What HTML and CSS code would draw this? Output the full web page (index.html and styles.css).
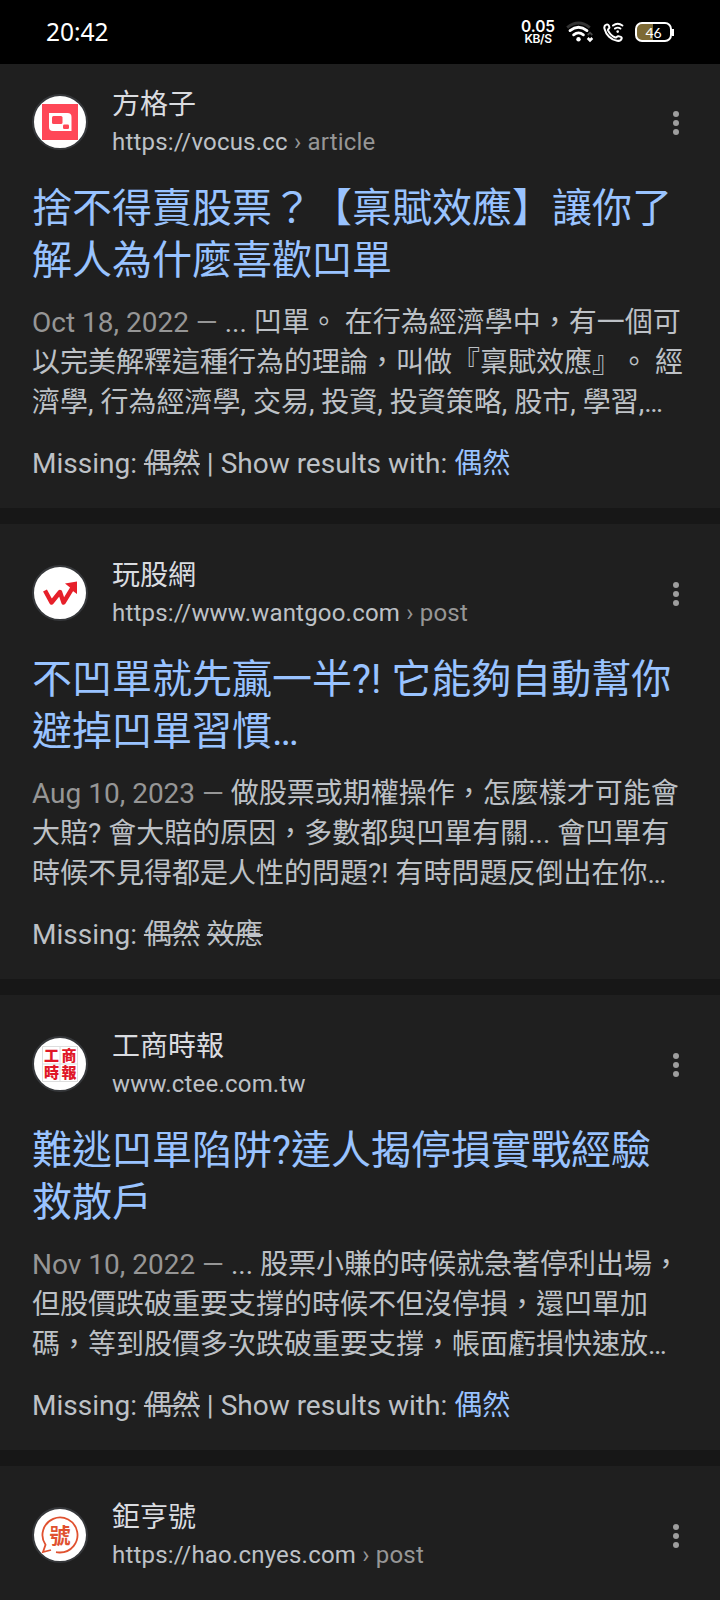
FILE: index.html
```html
<!DOCTYPE html>
<html lang="zh-Hant">
<head>
<meta charset="utf-8">
<title>Search results</title>
<link rel="stylesheet" href="styles.css">
</head>
<body>
<header class="status">
  <span class="clock">20:42</span>
  <div class="net"><span class="net-value">0.05</span><span class="net-unit">KB/S</span></div>
  <svg class="wifi" width="28" height="24" viewBox="0 0 28 24" fill="none">
    <path d="M1.2 7.6Q12.5 -1.6 23.8 7.6" stroke="#333" stroke-width="3"/>
    <path d="M4 10.6Q12.5 4 21 10.6M7.6 14.8Q12.5 11 17.4 14.8" stroke="#fff" stroke-width="2.8" stroke-linecap="round"/>
    <circle cx="12.5" cy="19.2" r="2.2" fill="#fff"/>
    <path d="M21.7 15L24 12.7L26.3 15" stroke="#444" stroke-width="1.8"/>
    <path d="M21.700 18L24 20.300L26.300 18" stroke="#fff" stroke-width="2.600"/>
  </svg>
  <svg class="call" width="22" height="22" viewBox="0 0 22 22" fill="none" stroke="#fff" stroke-width="2" stroke-linecap="round" stroke-linejoin="round">
    <path d="M3.4 3.6C1.6 4.2 1 5.7 1.5 7.7C3 13.8 8 18.8 14.2 19.8C16.4 20.1 18.3 19 18.7 17.2C18.9 16.2 18.2 15.7 15.2 15.2C14 15 13.4 17 12.2 16.5C9 15 6.400 12.400 5 9.300C4.600 8.100 6.600 7.500 6.400 6.300C5.900 3.600 4.600 3.200 3.400 3.600Z"/>
    <path d="M10 4.600Q14.700 1 19.400 4.600M12 7.600Q14.700 5.600 17.400 7.600" stroke-width="1.900"/>
    <circle cx="14.7" cy="10.6" r="1.300" fill="#fff" stroke="none"/>
  </svg>
  <div class="battery"><span>46</span></div>
</header>

<main>
  <article class="card first">
    <div class="head">
      <div class="favicon"><svg width="52" height="52" viewBox="0 0 52 52"><path fill="#ff4757" d="M8 8h36v36H8z"/><path fill="#fff" d="M15 17h18.500q4 0 4 4v14H19q-4 0-4-4z"/><rect x="18" y="20" width="10.500" height="8" rx="1.500" fill="#ff4757"/><rect x="29" y="28.500" width="6" height="4.500" rx="1.200" fill="#ff4757"/></svg></div>
      <div class="site"><div class="name">方格子</div><div class="url">https://vocus.cc<span class="path"> › article</span></div></div>
      <div class="more"><i></i><i></i><i></i></div>
    </div>
    <h3 class="title">捨不得賣股票？【稟賦效應】讓你了<br>解人為什麼喜歡凹單</h3>
    <p class="snippet"><span class="date">Oct 18, 2022 — </span>... 凹單。 在行為經濟學中，有一個可<br>以完美解釋這種行為的理論，叫做『稟賦效應』。 經<br>濟學, 行為經濟學, 交易, 投資, 投資策略, 股市, 學習,<span class="cut">…</span></p>
    <p class="missing">Missing: <s>偶然</s> | Show results with: <a>偶然</a></p>
  </article>

  <article class="card">
    <div class="head">
      <div class="favicon"><svg width="52" height="52" viewBox="0 0 52 52" fill="none" stroke="#e6202a"><path d="M11 23.500L17.500 35.500L26 25L29.500 35.500L39 20" stroke-width="4.400" stroke-linejoin="round"/><path fill="#e6202a" stroke="none" d="M31 16.500L43 14.500L43 27L39.500 24.500L36 20.500z"/></svg></div>
      <div class="site"><div class="name">玩股網</div><div class="url">https://www.wantgoo.com<span class="path"> › post</span></div></div>
      <div class="more"><i></i><i></i><i></i></div>
    </div>
    <h3 class="title">不凹單就先贏一半?! 它能夠自動幫你<br>避掉凹單習慣<span class="cut">…</span></h3>
    <p class="snippet"><span class="date">Aug 10, 2023 — </span>做股票或期權操作，怎麼樣才可能會<br>大賠? 會大賠的原因，多數都與凹單有關... 會凹單有<br>時候不見得都是人性的問題?! 有時問題反倒出在你<span class="cut">…</span></p>
    <p class="missing">Missing: <s>偶然</s> <s>效應</s></p>
  </article>

  <article class="card">
    <div class="head">
      <div class="favicon"><svg width="52" height="52" viewBox="0 0 52 52"><path d="M8.500 8.500h35v35h-35zM26 8.500v35M8.500 26h35" fill="none" stroke="#ddd"/><g class="seal"><text x="17.500" y="23">工</text><text x="35" y="23">商</text><text x="17.500" y="40">時</text><text x="35" y="40">報</text></g></svg></div>
      <div class="site"><div class="name">工商時報</div><div class="url">www.ctee.com.tw</div></div>
      <div class="more"><i></i><i></i><i></i></div>
    </div>
    <h3 class="title">難逃凹單陷阱?達人揭停損實戰經驗<br>救散戶</h3>
    <p class="snippet"><span class="date">Nov 10, 2022 — </span>... 股票小賺的時候就急著停利出場，<br>但股價跌破重要支撐的時候不但沒停損，還凹單加<br>碼，等到股價多次跌破重要支撐，帳面虧損快速放<span class="cut">…</span></p>
    <p class="missing">Missing: <s>偶然</s> | Show results with: <a>偶然</a></p>
  </article>

  <article class="card last">
    <div class="head">
      <div class="favicon"><svg width="52" height="52" viewBox="0 0 52 52"><path d="M22 43.200A17.500 17.500 0 0 0 26 43.500A17.500 17.500 0 1 0 11.500 35.800L9 43L17 41" fill="none" stroke="#e0512f" stroke-width="1.800"/><text class="hao" x="26" y="34" text-anchor="middle">號</text></svg></div>
      <div class="site"><div class="name">鉅亨號</div><div class="url">https://hao.cnyes.com<span class="path"> › post</span></div></div>
      <div class="more"><i></i><i></i><i></i></div>
    </div>
  </article>
</main>
</body>
</html>
```
FILE: styles.css
```css
* { box-sizing: border-box; }
body {
  margin: 0;
  width: 720px;
  height: 1600px;
  overflow: hidden;
  background: #171717;
  color: #bdc1c6;
  font-family: Roboto, "Noto Sans CJK TC", sans-serif;
  text-spacing-trim: space-all;
}
.status {
  height: 64px;
  padding: 0 48px 0 46px;
  display: flex;
  align-items: center;
  background: #000;
  color: #fff;
}
.clock { flex: 1; font: 24.5px/30px "Noto Sans", sans-serif; }
.net { width: 34px; display: flex; flex-direction: column; align-items: center; font-family: Inter, sans-serif; font-weight: 600; }
.net-value { height: 13px; font-size: 15.5px; line-height: 13px; letter-spacing: -0.1px; }
.net-unit { height: 11px; font-size: 12px; line-height: 12px; letter-spacing: -0.4px; }
.wifi { margin-left: 11px; }
.call { margin-left: 9px; }
.battery {
  position: relative;
  width: 37px;
  height: 20px;
  margin-left: 10px;
  border: 2px solid #fff;
  border-radius: 7px;
  background: linear-gradient(to right, #7d6a35 16px, #000 16px);
  font: 14px/17px Lato, sans-serif;
  text-align: center;
}
.battery::after { content: ""; position: absolute; right: -4px; top: 5px; width: 2px; height: 7px; background: #fff; }

.card { height: 455px; margin-bottom: 16px; padding: 30px 32px 0; background: #1f1f1f; }
.first { height: 444px; padding-top: 19px; }
.last { height: 134px; margin-bottom: 0; }
.head { height: 78px; display: flex; align-items: center; }
.favicon {
  width: 56px;
  height: 56px;
  border: 2px solid #36383b;
  border-radius: 50%;
  background: #fff;
  display: flex;
  align-items: center;
  justify-content: center;
}
.favicon svg { flex: none; }
.site { flex: 1; margin-left: 24px; padding-top: 3px; }
.name { font-size: 28px; line-height: 37px; color: #dadce0; }
.url { font-size: 24px; line-height: 38px; white-space: pre; letter-spacing: 0.2px; }
.path, .date { color: #969696; }
.more { width: 6px; margin: 2px 9px 0 0; display: flex; flex-direction: column; gap: 3px; }
.more i { width: 6px; height: 6px; border-radius: 50%; background: #9e9e9e; }
.title { margin: 22px 0 0; font-size: 40px; line-height: 52px; font-weight: 400; color: #99c3ff; white-space: nowrap; }
.snippet { margin: 16px 0 0; font-size: 28px; line-height: 40px; white-space: nowrap; }
.missing { margin: 21px 0 0; font-size: 28px; line-height: 40px; white-space: nowrap; }
.missing a { color: #99c3ff; }
.missing s { text-decoration-thickness: 2px; }
.cut { font-family: Roboto, sans-serif; }
.seal { font: 900 15px "Noto Sans CJK TC", sans-serif; fill: #e01828; text-anchor: middle; }
.hao { font: 700 21px "Noto Sans CJK TC", sans-serif; fill: #e0512f; }
```
